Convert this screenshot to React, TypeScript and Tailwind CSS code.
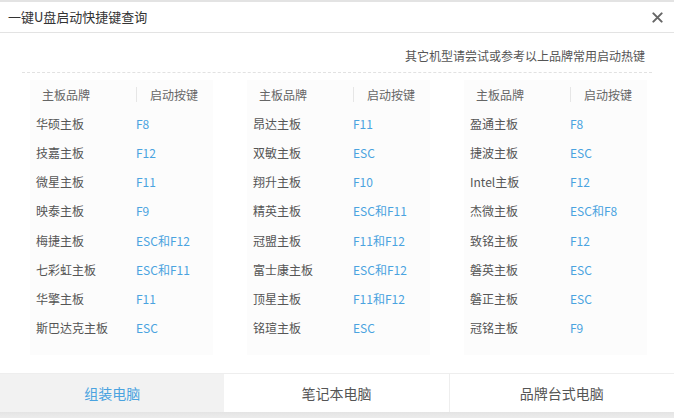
import React from 'react';

type Row = [string, string];

const groups: Row[][] = [
  [
    ['华硕主板', 'F8'],
    ['技嘉主板', 'F12'],
    ['微星主板', 'F11'],
    ['映泰主板', 'F9'],
    ['梅捷主板', 'ESC和F12'],
    ['七彩虹主板', 'ESC和F11'],
    ['华擎主板', 'F11'],
    ['斯巴达克主板', 'ESC'],
  ],
  [
    ['昂达主板', 'F11'],
    ['双敏主板', 'ESC'],
    ['翔升主板', 'F10'],
    ['精英主板', 'ESC和F11'],
    ['冠盟主板', 'F11和F12'],
    ['富士康主板', 'ESC和F12'],
    ['顶星主板', 'F11和F12'],
    ['铭瑄主板', 'ESC'],
  ],
  [
    ['盈通主板', 'F8'],
    ['捷波主板', 'ESC'],
    ['Intel主板', 'F12'],
    ['杰微主板', 'ESC和F8'],
    ['致铭主板', 'F12'],
    ['磐英主板', 'ESC'],
    ['磐正主板', 'ESC'],
    ['冠铭主板', 'F9'],
  ],
];

const tabs = ['组装电脑', '笔记本电脑', '品牌台式电脑'];

const KeyTable: React.FC<{ rows: Row[] }> = ({ rows }) => (
  <div className="bg-[#fcfcfc] pb-[12px]">
    <div className="flex h-[29px] items-center text-[#666]">
      <span className="w-[106px] pl-[12px]">主板品牌</span>
      <span className="h-[15px] w-px bg-[#e6e6e6]" />
      <span className="pl-[13px]">启动按键</span>
    </div>
    {rows.map(([brand, key]) => (
      <div key={brand} className="flex h-[29.25px] items-center">
        <span className="w-[106px] pl-[6px] text-[#555]">{brand}</span>
        <span className="text-[#4aa3e0]">{key}</span>
      </div>
    ))}
  </div>
);

export default function App() {
  return (
    <div
      className="h-[418px] w-[674px] bg-white text-[12px] leading-[20px]"
      style={{ fontFamily: '"Microsoft YaHei", "Noto Sans CJK SC", "Noto Sans", sans-serif' }}
    >
      <div className="flex h-[33px] items-center justify-between border-t-2 border-b border-[#e3e3e3] pl-[8px] pr-[11px]">
        <span className="text-[13px] text-[#333]">一键U盘启动快捷键查询</span>
        <svg width="11" height="11" viewBox="0 0 12 12">
          <path d="M1.5 1.5 L10.5 10.5 M10.5 1.5 L1.5 10.5" stroke="#666" strokeWidth="2.2" strokeLinecap="round" />
        </svg>
      </div>

      <div className="mt-[13px] h-[20px] pr-[29px] text-right text-[#555]">
        其它机型请尝试或参考以上品牌常用启动热键
      </div>
      <div className="mx-[22px] mt-[6px] border-b border-dashed border-[#e2e2e2]" />

      <div className="mt-[7px] grid grid-cols-[183px_183px_183px] gap-x-[34px] pl-[30px]">
        {groups.map((rows, i) => (
          <KeyTable key={i} rows={rows} />
        ))}
      </div>

      <div className="mt-[18px] flex h-[39px] border-t border-[#eeeeee] text-[14px]">
        {tabs.map((tab, i) => (
          <div
            key={tab}
            className={
              i === 0
                ? 'flex flex-1 items-center justify-center bg-[#f2f2f2] text-[#4aa3e0]'
                : i === 2
                  ? 'flex flex-1 items-center justify-center border-l border-[#eeeeee] text-[#555]'
                  : 'flex flex-1 items-center justify-center text-[#555]'
            }
          >
            {tab}
          </div>
        ))}
      </div>
      <div className="h-[6px] bg-gradient-to-b from-[#e4e4e4] to-[#ececec]" />
    </div>
  );
}
